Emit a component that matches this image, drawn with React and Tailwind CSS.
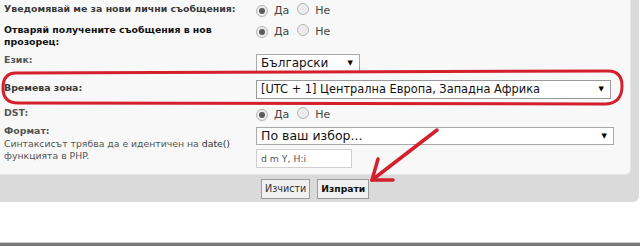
import React from "react";

const font = { fontFamily: '"DejaVu Sans", Verdana, sans-serif' };

function Radio({ checked }) {
  return (
    <span className="inline-flex w-[12px] h-[12px] rounded-full border border-[#b5b5b5] bg-[#ececec] items-center justify-center">
      {checked && <span className="w-[6px] h-[6px] rounded-full bg-[#5a5a5a]" />}
    </span>
  );
}

function YesNo() {
  return (
    <div className="flex items-center text-[11px] text-[#444] leading-[12px]">
      <Radio checked />
      <span className="ml-[6px]">Да</span>
      <span className="ml-[8px]"><Radio /></span>
      <span className="ml-[6px]">Не</span>
    </div>
  );
}

function Arrow() {
  return <span className="text-[7px] text-black leading-none">▼</span>;
}

export default function App() {
  return (
    <div className="w-[640px] h-[246px] bg-white relative overflow-hidden" style={font}>
      <div className="w-[639px] h-[202px] bg-[#dadada] rounded-br-[6px] flex flex-col">
        <div className="w-[631px] h-[175px] bg-[#f8f8f8] rounded-br-[6px] border-r border-b border-[#e6e6e6] flex flex-col">
          {/* row 1 */}
          <div className="h-[20px] flex">
            <div className="w-[256px] pl-[4px] pt-[3px] text-[9.4px] leading-[12px] font-bold text-[#3a3a3a] whitespace-nowrap">
              Уведомявай ме за нови лични съобщения:
            </div>
            <div className="pt-[3px]"><YesNo /></div>
          </div>
          {/* row 2 */}
          <div className="h-[30px] flex">
            <div className="w-[256px] pl-[4px] pt-[4px] text-[9.4px] leading-[12px] font-bold text-[#111]">
              Отваряй получените съобщения в нов<br />прозорец:
            </div>
            <div className="pt-[4px]"><YesNo /></div>
          </div>
          {/* row 3 */}
          <div className="h-[26px] flex">
            <div className="w-[256px] pl-[4px] pt-[4px] text-[9.4px] leading-[12px] font-bold text-[#555]">
              Език:
            </div>
            <div className="pt-[4px]">
              <div className="w-[104px] h-[18px] bg-white border border-[#a9a9a9] flex items-center justify-between pl-[4px] pr-[6px] text-[12px] text-[#111]">
                <span>Български</span>
                <Arrow />
              </div>
            </div>
          </div>
          {/* row 4 */}
          <div className="h-[26px] flex">
            <div className="w-[256px] pl-[4px] pt-[6px] text-[9.4px] leading-[12px] font-bold text-[#3a3a3a]">
              Времева зона:
            </div>
            <div className="pt-[4px]">
              <div className="w-[355px] h-[19px] bg-white border border-[#9a9a9a] flex items-center justify-between pl-[4px] pr-[6px] text-[11.4px] text-[#111]">
                <span>[UTC + 1] Централна Европа, Западна Африка</span>
                <Arrow />
              </div>
            </div>
          </div>
          {/* row 5 */}
          <div className="h-[22px] flex">
            <div className="w-[256px] pl-[4px] pt-[5px] text-[9.4px] leading-[12px] font-bold text-[#555]">
              DST:
            </div>
            <div className="pt-[5px]"><YesNo /></div>
          </div>
          {/* row 6 */}
          <div className="flex-1 flex">
            <div className="w-[256px] pl-[4px] pt-[1px] leading-[12px] text-[#555]">
              <div className="font-bold text-[9.4px]">Формат:</div>
              <div className="mt-[1px] text-[9.3px] whitespace-nowrap">Синтаксисът трябва да е идентичен на <span className="text-[#333]">date()</span></div>
              <div className="text-[9.3px]">функцията в PHP.</div>
            </div>
            <div className="pt-[3px] flex flex-col">
              <div className="w-[358px] h-[18px] bg-white border border-[#a9a9a9] flex items-center justify-between pl-[4px] pr-[6px] text-[12.5px] text-[#111]">
                <span>По ваш избор...</span>
                <Arrow />
              </div>
              <div className="mt-[4px] w-[96px] h-[19px] bg-white border border-[#cfcfcf] flex items-center pl-[4px] text-[9.3px] text-[#555]">
                d m Y, H:i
              </div>
            </div>
          </div>
        </div>
        {/* buttons */}
        <div className="flex-1 flex items-start pt-[4px] pl-[261px] gap-[7px]">
          <button className="h-[20px] px-[3px] bg-[#f0f0f0] border border-[#9a9a9a] text-[9.6px] text-[#333] leading-none" style={font}>
            Изчисти
          </button>
          <button className="h-[20px] px-[3px] bg-[#f0f0f0] border border-[#9a9a9a] text-[9.2px] font-bold text-[#111] leading-none" style={font}>
            Изпрати
          </button>
        </div>
      </div>
      <div className="absolute left-0 bottom-0 w-[640px] h-[4px] bg-[#7a7a7a] border-t border-[#cfcfcf]" />
      <svg className="absolute left-0 top-0 pointer-events-none" width="640" height="246">
        <path
          d="M16 73 L608 71 Q622 71 622 86 Q622 103 606 104 L18 103 Q3 103 3 88 Q3 73 16 73 Z"
          fill="none"
          stroke="#d41f2c"
          strokeWidth="3"
        />
        <path d="M437 130 L372 180" stroke="#d41f2c" strokeWidth="3.5" strokeLinecap="round" fill="none" />
        <path d="M378 159 L372 180 L393 180" stroke="#d41f2c" strokeWidth="3.5" strokeLinecap="round" strokeLinejoin="round" fill="none" />
      </svg>
    </div>
  );
}
